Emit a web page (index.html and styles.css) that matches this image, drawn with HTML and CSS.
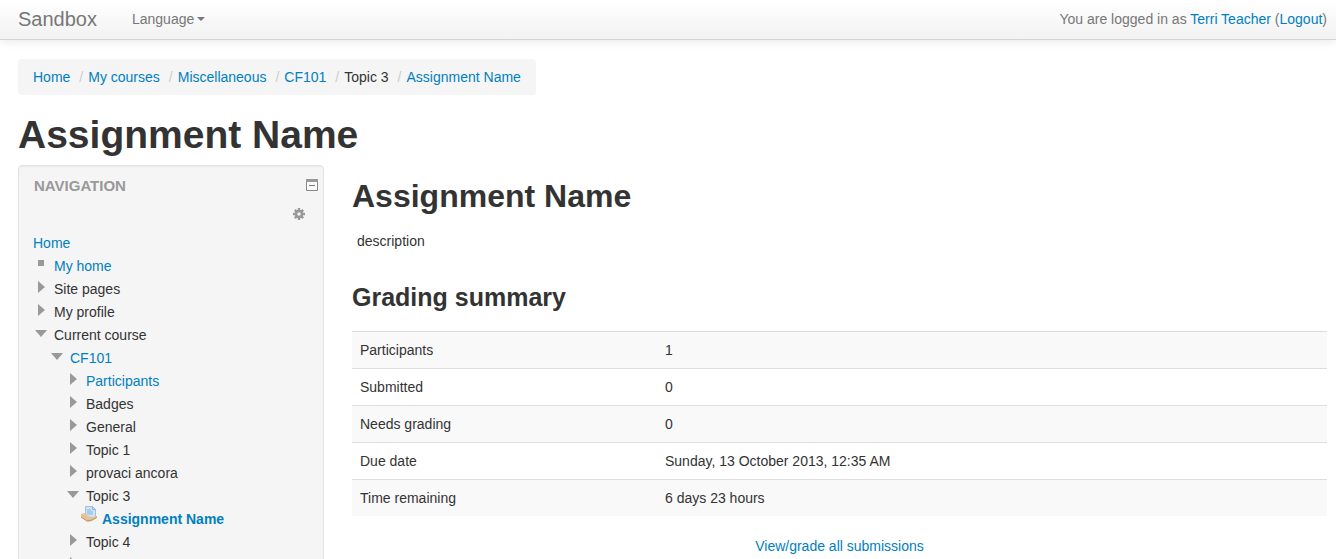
FILE: index.html
```html
<!DOCTYPE html>
<html lang="en">
<head>
<meta charset="utf-8">
<title>Assignment Name</title>
<link rel="stylesheet" href="styles.css">
</head>
<body>
<header class="navbar">
  <a class="brand" href="#">Sandbox</a>
  <button class="language" type="button">Language<span class="caret"></span></button>
  <div class="login">You are logged in as <a href="#">Terri Teacher</a> (<a href="#">Logout</a>)</div>
</header>
<div class="page">
  <nav aria-label="Breadcrumb">
    <ol class="breadcrumb">
      <li><a href="#">Home</a></li>
      <li><a href="#">My courses</a></li>
      <li><a href="#">Miscellaneous</a></li>
      <li><a href="#">CF101</a></li>
      <li>Topic 3</li>
      <li><a href="#">Assignment Name</a></li>
    </ol>
  </nav>
  <h1 class="page-title">Assignment Name</h1>
  <div class="columns">
    <aside class="block">
      <div class="block-head">
        <h2 class="block-title">Navigation</h2>
        <button class="icon-button" type="button" aria-label="Hide Navigation block">
          <svg width="12" height="12" viewBox="0 0 12 12"><path d="M.5 .5h11v11H.5z" fill="#fafafa" stroke="#888"/><path d="M0 0h12v3H0z" fill="#999"/><path d="M3 6.500h6" stroke="#777"/></svg>
        </button>
      </div>
      <div class="block-actions">
        <button class="icon-button" type="button" aria-label="Actions">
          <svg width="12" height="12" viewBox="0 0 12 12"><g stroke="#999" stroke-width="2.4"><path d="M6 0v12M0 6h12M1.800 1.800l8.400 8.400M10.200 1.800L1.800 10.200"/></g><circle cx="6" cy="6" r="4.200" fill="#999"/><circle cx="6" cy="6" r="1.700" fill="#f5f5f5"/></svg>
        </button>
      </div>
      <a class="tree-root" href="#">Home</a>
      <ul class="tree">
        <li><div class="item leaf"><a href="#">My home</a></div></li>
        <li><div class="item closed">Site pages</div></li>
        <li><div class="item closed">My profile</div></li>
        <li><div class="item open">Current course</div>
          <ul class="tree nested">
            <li><div class="item open"><a href="#">CF101</a></div>
              <ul class="tree nested">
                <li><div class="item closed"><a href="#">Participants</a></div></li>
                <li><div class="item closed">Badges</div></li>
                <li><div class="item closed">General</div></li>
                <li><div class="item closed">Topic 1</div></li>
                <li><div class="item closed">provaci ancora</div></li>
                <li><div class="item open">Topic 3</div>
                  <ul class="tree nested">
                    <li><div class="item activity">
                      <svg width="16" height="16" viewBox="0 0 16 16"><path d="M4.500 .5h7l3 3v8.500h-10z" fill="#cfe4f8" stroke="#9fc0e2"/><path d="M11.500 .5v3h3M6 4h4M6 6h6M6 8h6" fill="none" stroke="#89b3de"/><path d="M0 8l4-1 3 3 4 1 5-1v2l-5 3-4 1-7-5z" fill="#e4c497"/><path d="M0 11l6 4 5-1 5-3" fill="none" stroke="#bd9468"/></svg>
                      <a href="#">Assignment Name</a></div></li>
                  </ul>
                </li>
                <li><div class="item closed">Topic 4</div></li>
                <li><div class="item closed"></div></li>
              </ul>
            </li>
          </ul>
        </li>
      </ul>
    </aside>
    <main class="content">
      <h2 class="content-title">Assignment Name</h2>
      <p class="description">description</p>
      <h3 class="summary-title">Grading summary</h3>
      <table class="summary">
        <tbody>
          <tr><th scope="row">Participants</th><td>1</td></tr>
          <tr><th scope="row">Submitted</th><td>0</td></tr>
          <tr><th scope="row">Needs grading</th><td>0</td></tr>
          <tr><th scope="row">Due date</th><td>Sunday, 13 October 2013, 12:35 AM</td></tr>
          <tr><th scope="row">Time remaining</th><td>6 days 23 hours</td></tr>
        </tbody>
      </table>
      <p class="submissions"><a href="#">View/grade all submissions</a></p>
    </main>
  </div>
</div>
</body>
</html>
```
FILE: styles.css
```css
* { box-sizing: border-box; }
body {
  margin: 0;
  height: 100vh;
  overflow: hidden;
  background: #fff;
  color: #333;
  font: 14px/20px "Liberation Sans", Arial, sans-serif;
}
a { color: #0080c0; text-decoration: none; }
h1, h2, h3, p, ul, ol { margin: 0; padding: 0; }
button { border: 0; background: none; padding: 0; font: inherit; color: inherit; cursor: pointer; }
svg { display: block; }

.navbar {
  display: flex;
  align-items: center;
  height: 40px;
  padding: 0 9px 1px 18px;
  background: linear-gradient(#fff, #f2f2f2);
  border-bottom: 1px solid #d4d4d4;
  box-shadow: 0 1px 10px rgba(0, 0, 0, .1);
  color: #777;
}
.brand { color: #777; font-size: 20px; }
.language { display: flex; align-items: center; gap: 3px; margin-left: 35px; }
.caret { border: 4px solid transparent; border-top-color: #777; border-bottom: 0; }
.login { margin-left: auto; }

.page { padding: 19px 9px 0 18px; }
.breadcrumb {
  display: inline-flex;
  padding: 8px 15px;
  border-radius: 4px;
  background: #f5f5f5;
  list-style: none;
  vertical-align: top;
}
.breadcrumb li + li::before { content: "/"; padding: 0 5px 0 9px; color: #ccc; }
.page-title { margin-top: 20px; color: #333; font-size: 39px; line-height: 40px; }

.columns { display: flex; align-items: flex-start; gap: 28px; margin-top: 10px; }
.block {
  flex: 0 0 306px;
  padding: 10px 5px 20px 15px;
  border: 1px solid #e3e3e3;
  border-radius: 4px;
  background: #f5f5f5;
  box-shadow: inset 0 1px 1px rgba(0, 0, 0, .05);
}
.block-head { display: flex; justify-content: space-between; align-items: flex-start; height: 20px; }
.block-head .icon-button { margin-top: 3px; }
.block-title { color: #999; font-size: 15px; line-height: 20px; text-transform: uppercase; }
.block-actions { display: flex; justify-content: flex-end; padding: 12px 13px 0 0; margin-bottom: 12px; }
.tree-root { display: block; padding: 1px 0 0; margin-top: 8px; margin-left: -1px; }
.tree { list-style: none; }
.nested { padding-left: 16px; }
.item { display: grid; grid-template-columns: 20px 1fr; height: 23px; padding-top: 3px; }
.item::before { content: ""; }
.leaf::before { width: 6px; height: 6px; margin: 4px 0 0 4px; background: #999; }
.closed::before {
  width: 7px;
  height: 12px;
  margin: 2px 0 0 4px;
  background: #999;
  clip-path: polygon(0 0, 100% 50%, 0 100%);
}
.open::before {
  width: 12px;
  height: 7px;
  margin: 5px 0 0 1px;
  background: #999;
  clip-path: polygon(0 0, 100% 0, 50% 100%);
}
.activity { display: flex; align-items: flex-start; gap: 5px; margin-left: -1px; padding-top: 0; font-weight: bold; }
.activity a { padding-top: 3px; }
.activity::before { display: none; }

.content { flex: 1; min-width: 0; }
.content-title { margin-top: 11px; font-size: 32px; line-height: 40px; }
.description { padding: 15px 5px 0; }
.summary-title { margin-top: 26px; font-size: 25px; line-height: 40px; }
.summary { width: 100%; margin-top: 14px; border-collapse: collapse; table-layout: fixed; }
.summary th { width: 305px; font-weight: normal; }
.summary th, .summary td { padding: 8px; border-top: 1px solid #ddd; text-align: left; vertical-align: top; line-height: 20px; }
.summary tr:nth-child(odd) { background: #f9f9f9; }
.submissions { margin-top: 20px; text-align: center; }
```
